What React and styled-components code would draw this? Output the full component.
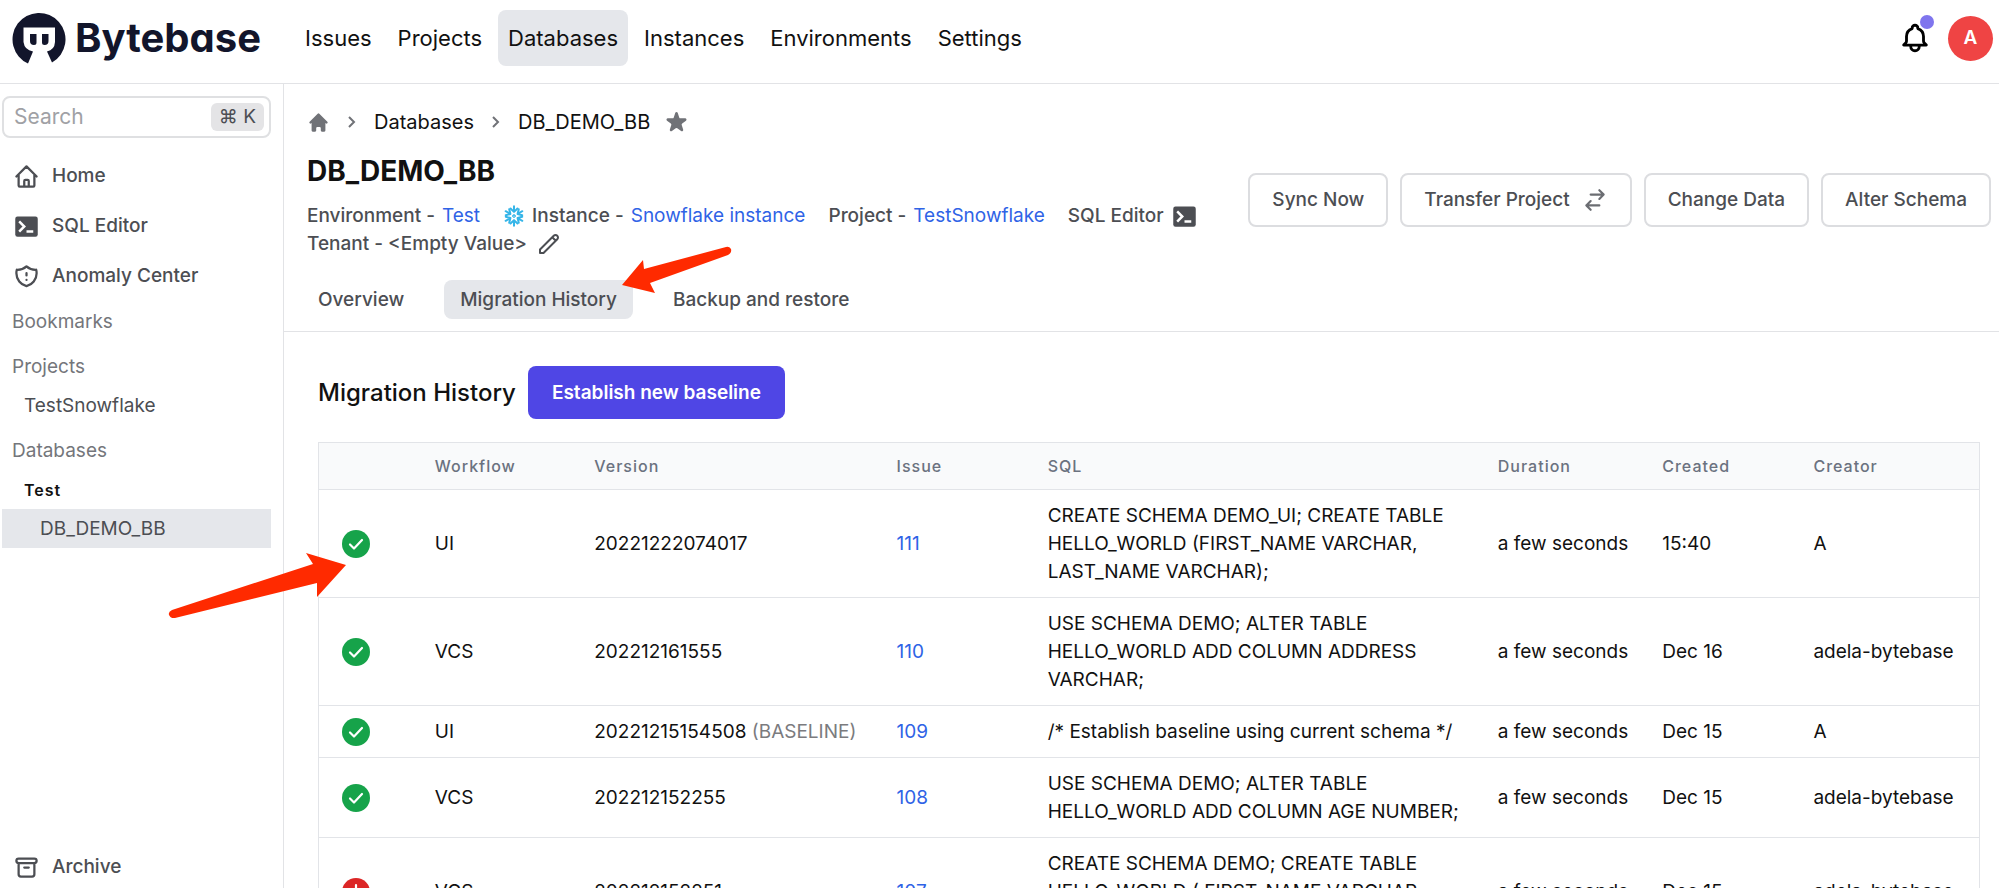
import React from "react";
import styled, { createGlobalStyle } from "styled-components";
import {
  HiHome,
  HiOutlineArchive,
  HiOutlineBell,
  HiOutlineHome,
  HiOutlinePencil,
  HiOutlineShieldExclamation,
  HiOutlineSwitchHorizontal,
  HiStar,
} from "react-icons/hi";

const GlobalStyle = createGlobalStyle`
  *, *::before, *::after {
    box-sizing: border-box;
  }

  body {
    margin: 0;
    background: #fff;
    color: #111;
    font-family: Inter, "Liberation Sans", sans-serif;
    font-size: 19px;
    line-height: 28px;
  }

  a {
    color: inherit;
    text-decoration: none;
  }

  button, input {
    font: inherit;
  }

  svg {
    display: block;
    flex-shrink: 0;
  }
`;

const Page = styled.div`
  display: flex;
  flex-direction: column;
  height: 100vh;
  overflow: hidden;
`;

const TopBar = styled.header`
  display: flex;
  align-items: center;
  flex-shrink: 0;
  height: 84px;
  padding: 0 6px 7px 0;
  border-bottom: 1px solid #e2e3e6;
`;

const Brand = styled.a`
  display: flex;
  align-items: center;
  gap: 9px;
  width: 283px;
  padding-left: 12px;
  color: #12152b;
`;

const BrandName = styled.span`
  font-size: 40px;
  font-weight: 700;
  line-height: 48px;
  font-feature-settings: "cv11";
`;

const MainNav = styled.nav`
  display: flex;
  gap: 6px;
  margin-left: 12px;
`;

const MainNavLink = styled.a`
  display: flex;
  align-items: center;
  height: 56px;
  padding: 0 10px;
  border-radius: 8px;
  font-size: 22px;
  background: ${(p) => (p.$active ? "#e5e7eb" : "transparent")};
`;

const Account = styled.div`
  display: flex;
  align-items: center;
  gap: 16px;
  margin-left: auto;
`;

const BellButton = styled.button`
  position: relative;
  padding: 0;
  border: 0;
  background: none;
  color: #000;
`;

const UnreadDot = styled.span`
  position: absolute;
  top: -6px;
  right: -2px;
  width: 14px;
  height: 14px;
  border-radius: 50%;
  background: #7f75ee;
`;

const Avatar = styled.button`
  width: 45px;
  height: 45px;
  padding: 0;
  border: 0;
  border-radius: 50%;
  background: #ef4444;
  color: #fff;
  font-weight: 600;
`;

const Body = styled.div`
  display: flex;
  flex: 1;
  min-height: 0;
`;

const Sidebar = styled.aside`
  display: flex;
  flex-direction: column;
  flex-shrink: 0;
  width: 284px;
  padding: 12px 12px 0 2px;
  border-right: 1px solid #e2e3e6;
  color: #4c4e53;
`;

const SearchBox = styled.label`
  display: flex;
  align-items: center;
  height: 42px;
  padding: 0 5px 0 10px;
  border: 2px solid #dfe0e2;
  border-radius: 8px;
`;

const SearchInput = styled.input`
  flex: 1;
  min-width: 0;
  padding: 0;
  border: 0;
  outline: 0;
  background: none;
  font-size: 21px;

  &::placeholder {
    color: #a0a1a5;
    opacity: 1;
  }
`;

const Shortcut = styled.kbd`
  padding: 0 8px;
  border-radius: 6px;
  background: #e4e4e6;
  font-family: Inter, "DejaVu Sans", sans-serif;
  font-size: 19px;
`;

const SideLinks = styled.nav`
  margin-top: ${(p) => (p.$bottom ? "auto" : "13px")};
`;

const SideLink = styled.a`
  display: flex;
  align-items: center;
  gap: 12px;
  padding: ${(p) => (p.$compact ? "7px 11px" : "11px")};
  font-weight: 500;
`;

const SideGroups = styled.div`
  display: flex;
  flex-direction: column;
  gap: 12px;
  padding-top: 7px;
`;

const SideHeading = styled.h3`
  margin: 0;
  padding: 0 0 5px 10px;
  color: #74767b;
  font-size: 19px;
  font-weight: 400;
`;

const SideItem = styled.a`
  display: flex;
  align-items: center;
  height: 39px;
  padding-left: ${(p) => (p.$nested ? "38px" : "22px")};
  background: ${(p) => (p.$active ? "#e5e7eb" : "transparent")};
`;

const EnvironmentName = styled(SideItem)`
  color: #111;
  font-size: 16px;
  font-weight: 600;
  letter-spacing: 1px;
`;

const Main = styled.main`
  flex: 1;
  min-width: 0;
`;

const DatabaseHeader = styled.section`
  padding: 24px 8px 12px 23px;
  border-bottom: 1px solid #e2e3e6;
`;

const Breadcrumb = styled.nav`
  display: flex;
  align-items: center;
  gap: 17px;
  font-size: 20px;
  color: #111;

  svg {
    color: #707277;
  }
`;

const CurrentCrumb = styled.span`
  display: flex;
  align-items: center;
  gap: 13px;
`;

const StarButton = styled.button`
  padding: 0;
  border: 0;
  background: none;
`;

const Summary = styled.div`
  display: flex;
  align-items: flex-start;
  gap: 24px;
  margin-top: 17px;
`;

const SummaryText = styled.div`
  flex: 1;
  min-width: 0;
`;

const DatabaseTitle = styled.h1`
  margin: 0 0 13px;
  font-size: 28px;
  font-weight: 700;
  line-height: 36px;
`;

const MetaList = styled.div`
  display: flex;
  flex-wrap: wrap;
  column-gap: 23px;
  color: #4c4e53;
  font-weight: 500;
`;

const MetaItem = styled.span`
  display: flex;
  align-items: center;
  gap: ${(p) => (p.$wide ? "10px" : "7px")};
`;

const TextLink = styled.a`
  color: #2f63e6;
  font-weight: 400;
`;

const Actions = styled.div`
  display: flex;
  gap: 12px;
  margin-top: 20px;
`;

const ActionButton = styled.button`
  display: flex;
  align-items: center;
  gap: 12px;
  height: 54px;
  padding: 0 22px;
  border: 2px solid #dcdde0;
  border-radius: 8px;
  background: #fff;
  color: #4c4e53;
  font-weight: 500;

  svg {
    color: #6b6d72;
  }
`;

const Tabs = styled.div`
  display: flex;
  gap: 24px;
  margin: 22px 0 0 -5px;
`;

const TabSlot = styled.div`
  position: relative;
`;

const Tab = styled.button`
  display: block;
  height: 39px;
  padding: 0 16px;
  border: 0;
  border-radius: 8px;
  background: ${(p) => (p.$active ? "#e5e7eb" : "transparent")};
  color: #4c4e53;
  font-weight: 500;
`;

/* Pointers drawn over the page */
const TabPointer = styled.svg`
  position: absolute;
  z-index: 2;
  left: calc(100% - 11px);
  top: -35px;
  pointer-events: none;
`;

const RowPointer = styled.svg`
  position: absolute;
  z-index: 2;
  right: calc(100% - 27px);
  top: 62px;
  pointer-events: none;
`;

const HistorySection = styled.section`
  padding: 34px 19px 0 34px;
`;

const HistoryHeading = styled.div`
  display: flex;
  align-items: center;
  gap: 12px;
  margin-bottom: 23px;
`;

const HistoryTitle = styled.h2`
  margin: 0;
  font-size: 24px;
  font-weight: 500;
`;

const PrimaryButton = styled.button`
  height: 53px;
  padding: 0 24px;
  border: 0;
  border-radius: 8px;
  background: #4f46e5;
  color: #fff;
  font-weight: 600;
`;

const Table = styled.table`
  width: 100%;
  table-layout: fixed;
  border: 1px solid #e2e4e8;
  border-collapse: collapse;
`;

const HeadCell = styled.th`
  width: ${(p) => p.$width};
  height: 47px;
  padding: 0 10px;
  background: #f9fafb;
  color: #6b7280;
  font-size: 16px;
  font-weight: 500;
  letter-spacing: 1px;
  text-align: left;
`;

const Row = styled.tr`
  border-top: 1px solid #e2e4e8;
`;

const Cell = styled.td`
  padding: 12px 10px 11px;
  vertical-align: middle;
  overflow-wrap: break-word;
`;

const StatusCell = styled(Cell)`
  position: relative;
  padding-left: 23px;
`;

const Baseline = styled.span`
  color: #7b7b7e;
`;

const ARROW_RED = "#ff2a00";

function Logo() {
  return (
    <svg width="54" height="52" viewBox="0 0 54 52" fill="currentColor" aria-hidden="true">
      <path d="M16 51.5A26.5 26.5 0 1 1 40 50.500L35 39.500Q42.500 38 43 30V15.500H11.500V30Q12.500 38 21 39.500Z" />
      <path d="M18 22h6.500v8.500a2.500 2.500 0 0 1-2.500 2.500q-4 0-4-4z" />
      <path d="M30 22h6.500v7q0 4-4 4a2.500 2.500 0 0 1-2.500-2.500z" />
    </svg>
  );
}

function TerminalIcon({ size = 24 }) {
  return (
    <svg width={size} height={size} viewBox="0 0 24 24" fill="none" aria-hidden="true">
      <rect x="2" y="3" width="20" height="18" rx="2" fill="#4c4e53" />
      <path d="M5.500 7.500l4.500 4.500-4.500 4.500M12 16.500h6" stroke="#fff" strokeWidth="2.200" />
    </svg>
  );
}

function SnowflakeIcon() {
  return (
    <svg width="22" height="22" viewBox="0 0 24 24" fill="none" stroke="#35b5e8" strokeWidth="2.200" strokeLinecap="round" strokeLinejoin="round" aria-hidden="true">
      {[0, 60, 120, 180, 240, 300].map((angle) => (
        <path key={angle} d="M12 1.500v4.500M8.200 3.800L12 7.500l3.800-3.700" transform={`rotate(${angle} 12 12)`} />
      ))}
      <path d="M12 10.500l1.500 1.500-1.500 1.500-1.500-1.500z" strokeWidth="1.400" />
    </svg>
  );
}

function Chevron() {
  return (
    <svg width="10" height="14" viewBox="0 0 10 14" fill="none" stroke="currentColor" strokeWidth="2" aria-hidden="true">
      <path d="M2 2l5 5-5 5" />
    </svg>
  );
}

function StatusIcon({ failed }) {
  return (
    <svg width="28" height="28" viewBox="0 0 28 28" fill="none" stroke="#fff" strokeWidth="2.200" strokeLinecap="round" strokeLinejoin="round" role="img" aria-label={failed ? "Failed" : "Done"}>
      <circle cx="14" cy="14" r="14" fill={failed ? "#dc2626" : "#16a34a"} stroke="none" />
      <path d={failed ? "M14 7v8M14 20v.1" : "M8 14.500l4 4 8-8.500"} />
    </svg>
  );
}

const navigation = ["Issues", "Projects", "Databases", "Instances", "Environments", "Settings"];

const columns = [
  { label: "", width: "6.4%" },
  { label: "Workflow", width: "9.6%" },
  { label: "Version", width: "18.2%" },
  { label: "Issue", width: "9.1%" },
  { label: "SQL", width: "27.1%" },
  { label: "Duration", width: "9.9%" },
  { label: "Created", width: "9.1%" },
  { label: "Creator", width: "10.6%" },
];

const history = [
  {
    workflow: "UI",
    version: "20221222074017",
    issue: 111,
    sql: "CREATE SCHEMA DEMO_UI; CREATE TABLE HELLO_WORLD (FIRST_NAME VARCHAR, LAST_NAME VARCHAR);",
    created: "15:40",
    creator: "A",
  },
  {
    workflow: "VCS",
    version: "202212161555",
    issue: 110,
    sql: "USE SCHEMA DEMO; ALTER TABLE HELLO_WORLD ADD COLUMN ADDRESS VARCHAR;",
    created: "Dec 16",
    creator: "adela-bytebase",
  },
  {
    workflow: "UI",
    version: "20221215154508",
    baseline: true,
    issue: 109,
    sql: "/* Establish baseline using current schema */",
    created: "Dec 15",
    creator: "A",
  },
  {
    workflow: "VCS",
    version: "202212152255",
    issue: 108,
    sql: "USE SCHEMA DEMO; ALTER TABLE HELLO_WORLD ADD COLUMN AGE NUMBER;",
    created: "Dec 15",
    creator: "adela-bytebase",
  },
  {
    workflow: "VCS",
    version: "202212152251",
    issue: 107,
    failed: true,
    sql: "CREATE SCHEMA DEMO; CREATE TABLE HELLO_WORLD ( FIRST_NAME VARCHAR, LAST_NAME VARCHAR );",
    created: "Dec 15",
    creator: "adela-bytebase",
  },
];

function Header() {
  return (
    <TopBar>
      <Brand href="#">
        <Logo />
        <BrandName>Bytebase</BrandName>
      </Brand>
      <MainNav>
        {navigation.map((name) => (
          <MainNavLink key={name} href="#" $active={name === "Databases"}>
            {name}
          </MainNavLink>
        ))}
      </MainNav>
      <Account>
        <BellButton aria-label="Inbox">
          <HiOutlineBell size={34} />
          <UnreadDot />
        </BellButton>
        <Avatar>A</Avatar>
      </Account>
    </TopBar>
  );
}

function SideMenu() {
  return (
    <Sidebar>
      <SearchBox>
        <SearchInput type="text" placeholder="Search" aria-label="Search" />
        <Shortcut>⌘ K</Shortcut>
      </SearchBox>
      <SideLinks>
        <SideLink href="#"><HiOutlineHome size={27} />Home</SideLink>
        <SideLink href="#"><TerminalIcon size={27} />SQL Editor</SideLink>
        <SideLink href="#"><HiOutlineShieldExclamation size={27} />Anomaly Center</SideLink>
      </SideLinks>
      <SideGroups>
        <div>
          <SideHeading>Bookmarks</SideHeading>
        </div>
        <div>
          <SideHeading>Projects</SideHeading>
          <SideItem href="#">TestSnowflake</SideItem>
        </div>
        <div>
          <SideHeading>Databases</SideHeading>
          <EnvironmentName href="#">Test</EnvironmentName>
          <SideItem href="#" $nested $active>DB_DEMO_BB</SideItem>
        </div>
      </SideGroups>
      <SideLinks $bottom>
        <SideLink href="#" $compact><HiOutlineArchive size={27} />Archive</SideLink>
      </SideLinks>
    </Sidebar>
  );
}

function DatabaseSummary() {
  return (
    <DatabaseHeader>
      <Breadcrumb aria-label="Breadcrumb">
        <a href="#" aria-label="Home"><HiHome size={23} /></a>
        <Chevron />
        <a href="#">Databases</a>
        <Chevron />
        <CurrentCrumb>
          DB_DEMO_BB
          <StarButton aria-label="Bookmark"><HiStar size={27} /></StarButton>
        </CurrentCrumb>
      </Breadcrumb>

      <Summary>
        <SummaryText>
          <DatabaseTitle>DB_DEMO_BB</DatabaseTitle>
          <MetaList>
            <MetaItem>Environment - <TextLink href="#">Test</TextLink></MetaItem>
            <MetaItem><SnowflakeIcon />Instance - <TextLink href="#">Snowflake instance</TextLink></MetaItem>
            <MetaItem>Project - <TextLink href="#">TestSnowflake</TextLink></MetaItem>
            <MetaItem>SQL Editor <TerminalIcon size={27} /></MetaItem>
            <MetaItem $wide>Tenant - &lt;Empty Value&gt; <HiOutlinePencil size={24} /></MetaItem>
          </MetaList>
        </SummaryText>
        <Actions>
          <ActionButton>Sync Now</ActionButton>
          <ActionButton>Transfer Project <HiOutlineSwitchHorizontal size={26} /></ActionButton>
          <ActionButton>Change Data</ActionButton>
          <ActionButton>Alter Schema</ActionButton>
        </Actions>
      </Summary>

      <Tabs>
        <Tab>Overview</Tab>
        <TabSlot>
          <Tab $active>Migration History</Tab>
          <TabPointer width="110" height="50" viewBox="0 0 110 50" aria-hidden="true">
            <path
              d="M0 40L21 15L22 24L104 2Q107 1 109 4Q110 8 106 10L28 38L33 48Z"
              fill={ARROW_RED}
            />
          </TabPointer>
        </TabSlot>
        <Tab>Backup and restore</Tab>
      </Tabs>
    </DatabaseHeader>
  );
}

function MigrationHistory() {
  return (
    <HistorySection>
      <HistoryHeading>
        <HistoryTitle>Migration History</HistoryTitle>
        <PrimaryButton>Establish new baseline</PrimaryButton>
      </HistoryHeading>
      <Table>
        <thead>
          <tr>
            {columns.map((column) => (
              <HeadCell key={column.label} $width={column.width}>{column.label}</HeadCell>
            ))}
          </tr>
        </thead>
        <tbody>
          {history.map((item, index) => (
            <Row key={item.issue}>
              <StatusCell>
                <StatusIcon failed={item.failed} />
                {index === 0 && (
                  <RowPointer width="178" height="66" viewBox="0 0 178 66" aria-hidden="true">
                    <path
                      d="M178 13L138 1L145 12L4 58Q0 60 1 63Q3 67 7 66L149 31V45Z"
                      fill={ARROW_RED}
                    />
                  </RowPointer>
                )}
              </StatusCell>
              <Cell>{item.workflow}</Cell>
              <Cell>
                {item.version} {item.baseline && <Baseline>(BASELINE)</Baseline>}
              </Cell>
              <Cell><TextLink href="#">{item.issue}</TextLink></Cell>
              <Cell>{item.sql}</Cell>
              <Cell>a few seconds</Cell>
              <Cell>{item.created}</Cell>
              <Cell>{item.creator}</Cell>
            </Row>
          ))}
        </tbody>
      </Table>
    </HistorySection>
  );
}

function App() {
  return (
    <Page>
      <GlobalStyle />
      <Header />
      <Body>
        <SideMenu />
        <Main>
          <DatabaseSummary />
          <MigrationHistory />
        </Main>
      </Body>
    </Page>
  );
}

export default App;
